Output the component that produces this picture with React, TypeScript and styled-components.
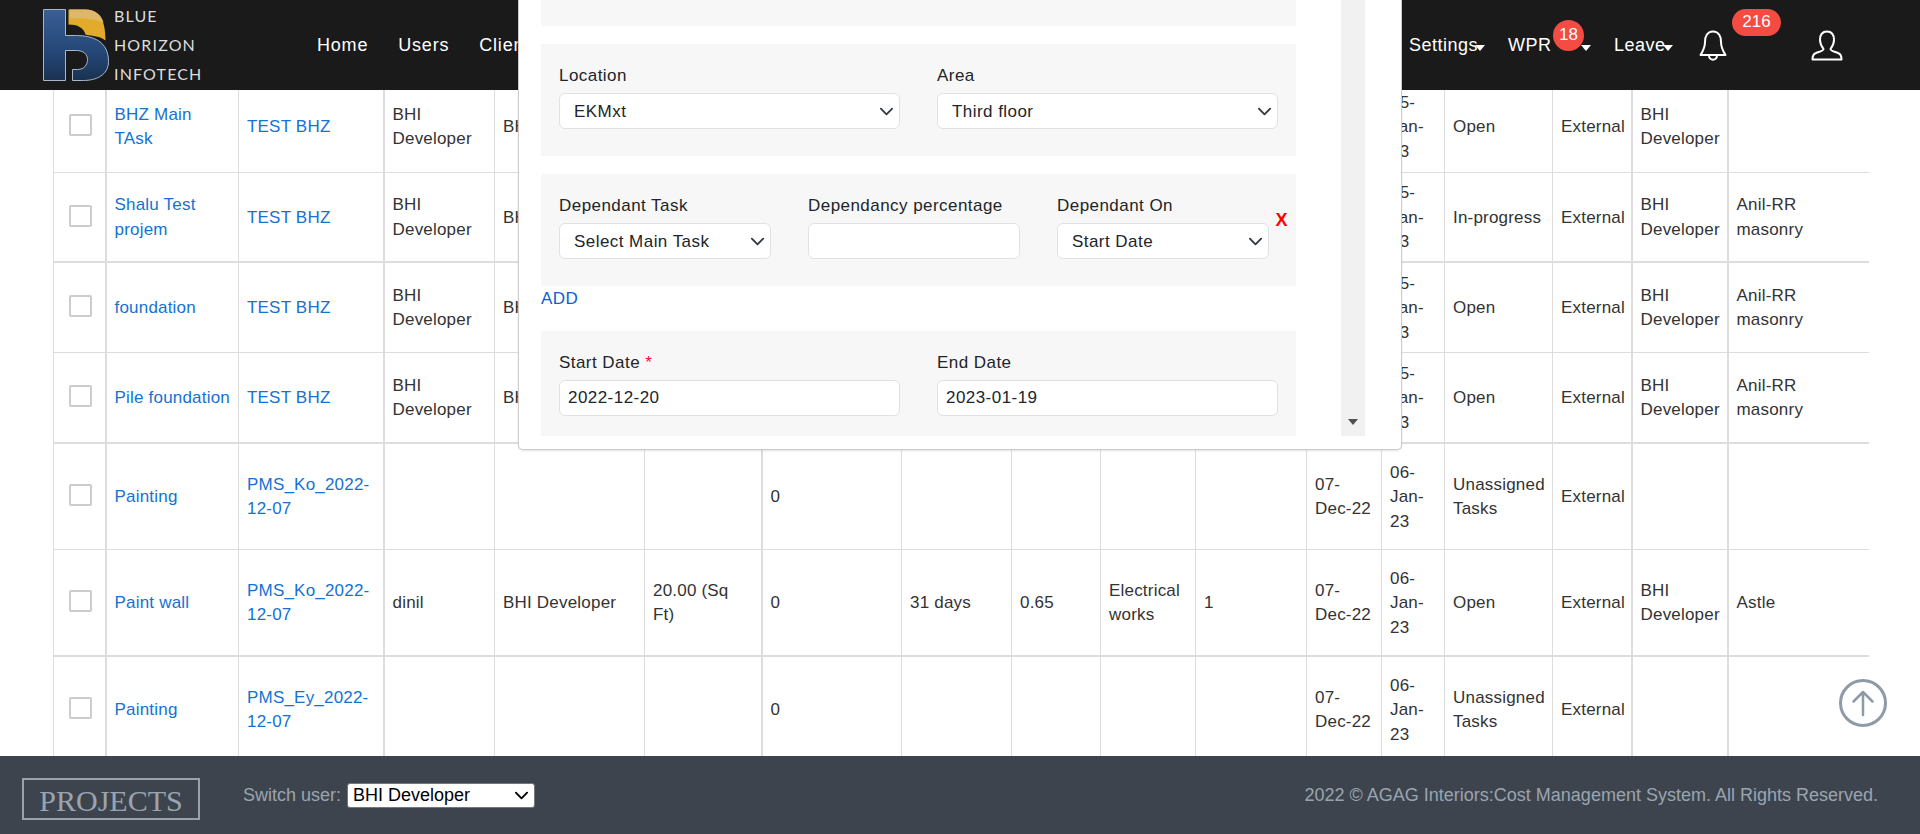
import styled, { createGlobalStyle } from "styled-components";

const GlobalStyle = createGlobalStyle`
  html, body {
    margin: 0;
    padding: 0;
    height: 100%;
    overflow: hidden;
    background: #fff;
  }
  body {
    font-family: "Liberation Sans", Arial, sans-serif;
    font-size: 17px;
    letter-spacing: 0.2px;
    color: #333;
  }
  * {
    box-sizing: border-box;
  }
`;

const chevronIcon = (color: string) =>
  encodeURIComponent(
    `<svg xmlns="http://www.w3.org/2000/svg" viewBox="0 0 16 16"><path fill="none" stroke="${color}" stroke-linecap="round" stroke-linejoin="round" stroke-width="2" d="m2 5 6 6 6-6"/></svg>`
  );

// Page shell
const Page = styled.div`
  position: relative;
  display: flex;
  flex-direction: column;
  width: 1920px;
  height: 834px;
  overflow: hidden;
`;

const Header = styled.header`
  display: flex;
  align-items: center;
  flex: 0 0 90px;
  height: 90px;
  padding: 0 77px 0 43px;
  background: #1a1a1a;
  color: #fff;
`;

const Brand = styled.div`
  display: flex;
  align-items: center;
  gap: 5px;
  width: 274px;
`;

const BrandText = styled.div`
  font-family: Lato, sans-serif;
  font-size: 16px;
  line-height: 29px;
  letter-spacing: 1.15px;
  color: #ddd;
  margin-top: -2px;
`;

const Nav = styled.nav`
  display: flex;
  gap: 30px;
  font-size: 18px;
  letter-spacing: 0.8px;
`;

const RightNav = styled.div`
  display: grid;
  grid-template-columns: 99px 106px 85px 112px auto;
  align-items: center;
  margin-left: auto;
  font-size: 18px;
  letter-spacing: 0.5px;
`;

const NavItem = styled.div`
  position: relative;
  display: flex;
  align-items: center;
`;

const Caret = styled.span<{ $shift: number }>`
  width: 0;
  height: 0;
  margin-left: ${(p) => p.$shift}px;
  margin-top: 5px;
  border-left: 5.5px solid transparent;
  border-right: 5.5px solid transparent;
  border-top: 6px solid #fff;
`;

const Badge = styled.span<{ $left: number; $top: number; $wide?: boolean }>`
  position: absolute;
  left: ${(p) => p.$left}px;
  top: ${(p) => p.$top}px;
  display: flex;
  align-items: center;
  justify-content: center;
  width: ${(p) => (p.$wide ? 49 : 31)}px;
  height: ${(p) => (p.$wide ? 27 : 31)}px;
  border-radius: 16px;
  background: #f44b42;
  color: #fff;
  font-size: 17px;
  letter-spacing: 0;
`;

// Table
const TableArea = styled.main`
  flex: 1;
  min-height: 0;
  overflow: hidden;
`;

const Table = styled.table`
  width: 1815px;
  margin: -9px 0 0 53px;
  table-layout: fixed;
  border-collapse: collapse;
  line-height: 24.5px;
`;

const Row = styled.tr<{ $h: number; $thick?: boolean }>`
  height: ${(p) => p.$h}px;

  td {
    border-bottom: ${(p) => (p.$thick ? 2 : 1)}px solid #ddd;
  }
`;

const Cell = styled.td<{ $thick?: boolean }>`
  padding: 2px 7px 0 8px;
  vertical-align: middle;
  border-left: ${(p) => (p.$thick ? 2 : 1)}px solid #ddd;
  color: #333;
  overflow: hidden;
`;

const LinkText = styled.a`
  color: #1472d4;
  text-decoration: none;
`;

const CheckBox = styled.span`
  display: block;
  width: 23px;
  height: 22px;
  margin: -4px 0 0 7px;
  border: 2px solid #ccc;
  border-radius: 2px;
  background: #fff;
`;

// Modal
const Modal = styled.section`
  position: absolute;
  top: 0;
  left: 518px;
  display: flex;
  width: 884px;
  height: 450px;
  padding: 0 36px 13px 22px;
  background: #fff;
  border: 1px solid #ccc;
  border-top: 0;
  border-radius: 0 0 5px 5px;
  box-shadow: 0 1px 2px rgba(0, 0, 0, 0.12);
  color: #212529;
  letter-spacing: 0.45px;
`;

const ModalBody = styled.div`
  display: flex;
  flex-direction: column;
  width: 755px;
`;

const Panel = styled.div<{ $h: number; $gap: number; $cols?: number }>`
  display: grid;
  grid-template-columns: repeat(${(p) => p.$cols ?? 2}, 1fr);
  column-gap: 37px;
  align-content: start;
  position: relative;
  height: ${(p) => p.$h}px;
  margin-bottom: ${(p) => p.$gap}px;
  padding: 20px ${(p) => (p.$cols === 3 ? 27 : 18)}px 0 18px;
  background: #f7f7f7;
`;

const Field = styled.div`
  display: flex;
  flex-direction: column;
`;

const Label = styled.label`
  height: 29px;
  line-height: 23px;
`;

const Required = styled.span`
  color: #f00f3c;
`;

const Select = styled.select`
  appearance: none;
  width: 100%;
  height: 36px;
  padding: 0 30px 0 14px;
  border: 1px solid #dee2e6;
  border-radius: 6px;
  background: #fff url("data:image/svg+xml,${chevronIcon("#343a40")}") no-repeat right 5px center / 15px 15px;
  color: #212529;
  font: inherit;
  letter-spacing: inherit;
`;

const TextInput = styled.input`
  width: 100%;
  height: 36px;
  padding: 0 8px;
  border: 1px solid #dee2e6;
  border-radius: 6px;
  background: #fff;
  color: #212529;
  font: inherit;
  letter-spacing: inherit;
`;

const RemoveMark = styled.span`
  position: absolute;
  right: 8px;
  top: 36px;
  color: #f00;
  font-weight: 700;
  font-size: 18px;
  line-height: 20px;
`;

const AddLink = styled.a`
  height: 45px;
  padding-top: 1px;
  color: #0d5fd0;
  line-height: 24px;
`;

const ScrollTrack = styled.div`
  display: flex;
  align-items: flex-end;
  justify-content: center;
  width: 24px;
  height: 436px;
  margin-left: 45px;
  padding-bottom: 11px;
  background: #f1f1f1;
`;

const ScrollArrow = styled.span`
  width: 0;
  height: 0;
  border-left: 5px solid transparent;
  border-right: 5px solid transparent;
  border-top: 6px solid #505050;
`;

const ToTop = styled.a`
  position: absolute;
  left: 1839px;
  top: 679px;
  display: block;
  width: 48px;
  height: 48px;
`;

// Footer
const Footer = styled.footer`
  display: flex;
  align-items: center;
  flex: 0 0 78px;
  padding: 0 42px 0 22px;
  background: #3d444e;
  color: #9aa4b0;
`;

const ProjectsBox = styled.div`
  display: flex;
  align-items: center;
  justify-content: center;
  width: 178px;
  height: 42px;
  margin-top: 8px;
  border: 2px solid #9aa1ab;
  font-family: "Liberation Serif", serif;
  font-size: 30px;
  letter-spacing: 0;
  padding-top: 4px;
`;

const SwitchUser = styled.div`
  display: flex;
  align-items: center;
  gap: 6px;
  margin-left: 43px;
  font-size: 18px;
  letter-spacing: 0;
`;

const UserSelect = styled.select`
  appearance: none;
  width: 188px;
  height: 25px;
  padding: 0 0 0 5px;
  font-family: "Liberation Sans", sans-serif;
  font-size: 18px;
  background: #fff url("data:image/svg+xml,${chevronIcon("#000")}") no-repeat right 5px center / 15px 15px;
  color: #000;
  border: 1px solid #767676;
  border-radius: 3px;
`;

const Copyright = styled.div`
  margin-left: auto;
  font-size: 18px;
  letter-spacing: 0;
`;

const columnWidths = [52, 133, 145, 111, 150, 117, 140, 110, 89, 95, 111, 75, 63, 108, 79, 96, 141];
const thickCols = [1, 3, 6, 15, 16];

type TaskRow = {
  h: number;
  thick?: boolean;
  cells: string[];
};

const rows: TaskRow[] = [
  {
    h: 91,
    cells: ["BHZ Main TAsk", "TEST BHZ", "BHI Developer", "BHI Developer", "", "", "", "", "", "", "", "05-Jan-23", "Open", "External", "BHI Developer", ""],
  },
  {
    h: 90,
    thick: true,
    cells: ["Shalu Test projem", "TEST BHZ", "BHI Developer", "BHI Developer", "", "", "", "", "", "", "", "05-Jan-23", "In-progress", "External", "BHI Developer", "Anil-RR masonry"],
  },
  {
    h: 90,
    cells: ["foundation", "TEST BHZ", "BHI Developer", "BHI Developer", "", "", "", "", "", "", "", "05-Jan-23", "Open", "External", "BHI Developer", "Anil-RR masonry"],
  },
  {
    h: 91,
    thick: true,
    cells: ["Pile foundation", "TEST BHZ", "BHI Developer", "BHI Developer", "", "", "", "", "", "", "", "05-Jan-23", "Open", "External", "BHI Developer", "Anil-RR masonry"],
  },
  {
    h: 106,
    cells: ["Painting", "PMS_Ko_2022-12-07", "", "", "", "0", "", "", "", "", "07-Dec-22", "06-Jan-23", "Unassigned Tasks", "External", "", ""],
  },
  {
    h: 107,
    thick: true,
    cells: ["Paint wall", "PMS_Ko_2022-12-07", "dinil", "BHI Developer", "20.00 (Sq Ft)", "0", "31 days", "0.65", "Electrical works", "1", "07-Dec-22", "06-Jan-23", "Open", "External", "BHI Developer", "Astle"],
  },
  {
    h: 106,
    cells: ["Painting", "PMS_Ey_2022-12-07", "", "", "", "0", "", "", "", "", "07-Dec-22", "06-Jan-23", "Unassigned Tasks", "External", "", ""],
  },
];

const Logo = () => (
  <svg width="66" height="72" viewBox="-0.5 -0.5 66 72">
    <defs>
      <linearGradient id="logoBlue" x1="0" y1="0" x2="0" y2="1">
        <stop offset="0" stopColor="#3a5f95" />
        <stop offset="0.65" stopColor="#234473" />
        <stop offset="1" stopColor="#1b3250" />
      </linearGradient>
    </defs>
    <path
      d="M0 0H22V26H32C50 26 65 32 65 52C65 66 52 71 40 71H29V60H34C41 60 44 55 44 50C44 45 40 41 33 41H22V71H0Z"
      fill="url(#logoBlue)"
      stroke="#a9b7c8"
      strokeWidth="1"
    />
    <path d="M25 0H42C58 0 62 14 62 31C56 26 50 27 42 25C40 18 34 15 25 15Z" fill="#e3ab2b" />
    <path d="M26 0H42C52 0 58 6 60 13C52 10 40 8 26 9Z" fill="#dcb868" />
  </svg>
);

const BellIcon = () => (
  <svg width="28" height="31" viewBox="0 0 28 31" fill="none" stroke="#fff" strokeWidth="2" strokeLinejoin="round">
    <path d="M14 1.5C8 1.5 6 7 6 12C6 18 4 21 1.5 25H26.5C24 21 22 18 22 12C22 7 20 1.5 14 1.5Z" />
    <path d="M10 25.5C10 31 18 31 18 25.5" />
  </svg>
);

const UserIcon = () => (
  <svg width="32" height="31" viewBox="0 0 32 31" fill="none" stroke="#fff" strokeWidth="2" strokeLinejoin="round">
    <path d="M16 1.5C11 1.5 9 5.5 9 10C9 14 11 17 12.5 19C12.5 21 9 21.5 5 23C2 24 1.5 26 1.5 29.5H30.5C30.5 26 30 24 27 23C23 21.5 19.5 21 19.5 19C21 17 23 14 23 10C23 5.5 21 1.5 16 1.5Z" />
  </svg>
);

const App = () => {
  return (
    <Page>
      <GlobalStyle />
      <Header>
        <Brand>
          <Logo />
          <BrandText>
            BLUE
            <br />
            HORIZON
            <br />
            INFOTECH
          </BrandText>
        </Brand>
        <Nav>
          <span>Home</span>
          <span>Users</span>
          <span>Clients</span>
        </Nav>
        <RightNav>
          <NavItem>
            Settings
            <Caret $shift={-3} />
          </NavItem>
          <NavItem>
            WPR
            <Badge $left={45} $top={-15}>18</Badge>
            <Caret $shift={29} />
          </NavItem>
          <NavItem>
            Leave
            <Caret $shift={-3} />
          </NavItem>
          <NavItem>
            <BellIcon />
            <Badge $left={33} $top={-21} $wide>216</Badge>
          </NavItem>
          <NavItem>
            <UserIcon />
          </NavItem>
        </RightNav>
      </Header>

      <TableArea>
        <Table>
          <colgroup>
            {columnWidths.map((w, i) => (
              <col key={i} style={{ width: w }} />
            ))}
          </colgroup>
          <tbody>
            {rows.map((row, r) => (
              <Row key={r} $h={row.h} $thick={row.thick}>
                <Cell>
                  <CheckBox />
                </Cell>
                {row.cells.map((text, c) => (
                  <Cell key={c} $thick={thickCols.includes(c + 1)}>
                    {c < 2 ? <LinkText>{text}</LinkText> : text}
                  </Cell>
                ))}
              </Row>
            ))}
          </tbody>
        </Table>
      </TableArea>

      <Footer>
        <ProjectsBox>PROJECTS</ProjectsBox>
        <SwitchUser>
          Switch user:
          <UserSelect defaultValue="BHI Developer">
            <option>BHI Developer</option>
          </UserSelect>
        </SwitchUser>
        <Copyright>2022 © AGAG Interiors:Cost Management System. All Rights Reserved.</Copyright>
      </Footer>

      <Modal>
        <ModalBody>
          <Panel $h={26} $gap={18} />
          <Panel $h={112} $gap={18}>
            <Field>
              <Label>Location</Label>
              <Select defaultValue="EKMxt">
                <option>EKMxt</option>
              </Select>
            </Field>
            <Field>
              <Label>Area</Label>
              <Select defaultValue="Third floor">
                <option>Third floor</option>
              </Select>
            </Field>
          </Panel>
          <Panel $h={112} $gap={0} $cols={3}>
            <Field>
              <Label>Dependant Task</Label>
              <Select defaultValue="Select Main Task">
                <option>Select Main Task</option>
              </Select>
            </Field>
            <Field>
              <Label>Dependancy percentage</Label>
              <TextInput readOnly />
            </Field>
            <Field>
              <Label>Dependant On</Label>
              <Select defaultValue="Start Date">
                <option>Start Date</option>
              </Select>
            </Field>
            <RemoveMark>X</RemoveMark>
          </Panel>
          <AddLink>ADD</AddLink>
          <Panel $h={105} $gap={0}>
            <Field>
              <Label>
                Start Date <Required>*</Required>
              </Label>
              <TextInput readOnly value="2022-12-20" />
            </Field>
            <Field>
              <Label>End Date</Label>
              <TextInput readOnly value="2023-01-19" />
            </Field>
          </Panel>
        </ModalBody>
        <ScrollTrack>
          <ScrollArrow />
        </ScrollTrack>
      </Modal>

      <ToTop>
        <svg width="48" height="48" viewBox="0 0 48 48" fill="none" stroke="#8f9aa7" strokeWidth="3" strokeLinecap="round" strokeLinejoin="round">
          <circle cx="24" cy="24" r="22.5" />
          <path d="M24 36V13M14.5 22.5L24 13L33.5 22.5" strokeWidth="2.5" />
        </svg>
      </ToTop>
    </Page>
  );
};

export default App;
